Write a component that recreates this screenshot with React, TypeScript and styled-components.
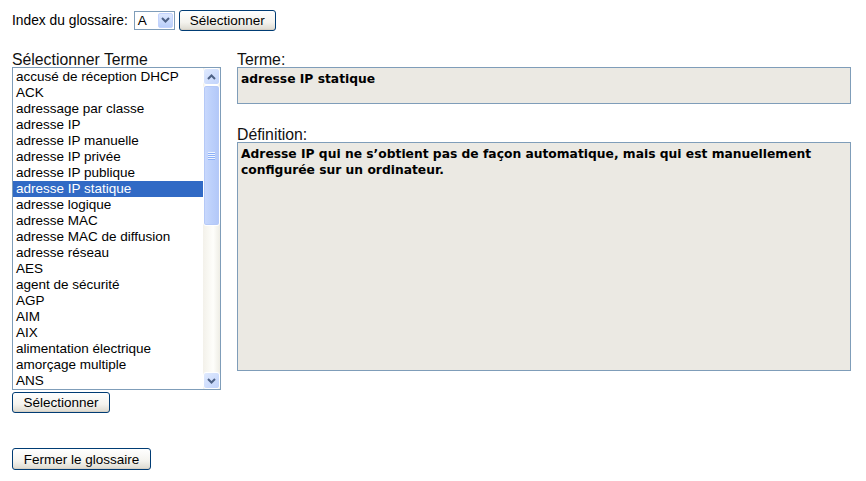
import React from "react";
import styled, { createGlobalStyle } from "styled-components";

const GlobalStyle = createGlobalStyle`
  html, body {
    margin: 0;
    padding: 0;
    background: #fff;
  }
  body {
    font-family: "Liberation Sans", Arial, sans-serif;
    color: #000;
  }
`;

const terms = [
  "accusé de réception DHCP",
  "ACK",
  "adressage par classe",
  "adresse IP",
  "adresse IP manuelle",
  "adresse IP privée",
  "adresse IP publique",
  "adresse IP statique",
  "adresse logique",
  "adresse MAC",
  "adresse MAC de diffusion",
  "adresse réseau",
  "AES",
  "agent de sécurité",
  "AGP",
  "AIM",
  "AIX",
  "alimentation électrique",
  "amorçage multiple",
  "ANS",
];

const selected = "adresse IP statique";

const Chevron = ({ up }: { up?: boolean }) => (
  <svg width="9" height="6" viewBox="0 0 9 6">
    <path
      d={up ? "M1 5 L4.5 1.5 L8 5" : "M1 1 L4.5 4.5 L8 1"}
      fill="none"
      stroke="#4D6185"
      strokeWidth="2"
    />
  </svg>
);

const App: React.FC = () => {
  return (
    <Page>
      <GlobalStyle />
      <TopBar>
        <IndexLabel>Index du glossaire:</IndexLabel>
        <Select>
          <SelectValue>A</SelectValue>
          <SelectArrow>
            <Chevron />
          </SelectArrow>
        </Select>
        <Button width={97}>Sélectionner</Button>
      </TopBar>

      <Columns>
        <LeftColumn>
          <Label>Sélectionner Terme</Label>
          <ListBox>
            <List>
              {terms.map((t) => (
                <Item key={t} active={t === selected}>
                  {t}
                </Item>
              ))}
            </List>
            <Scrollbar>
              <ArrowButton>
                <Chevron up />
              </ArrowButton>
              <Thumb>
                <Grip>
                  <span />
                  <span />
                  <span />
                  <span />
                </Grip>
              </Thumb>
              <Track />
              <ArrowButton>
                <Chevron />
              </ArrowButton>
            </Scrollbar>
          </ListBox>
          <ListButtonRow>
            <Button width={98}>Sélectionner</Button>
          </ListButtonRow>
        </LeftColumn>

        <RightColumn>
          <Label>Terme:</Label>
          <Field height={37}>adresse IP statique</Field>
          <Label spaced>Définition:</Label>
          <Field height={229}>
            Adresse IP qui ne s’obtient pas de façon automatique, mais qui est
            manuellement configurée sur un ordinateur.
          </Field>
        </RightColumn>
      </Columns>

      <CloseRow>
        <Button width={139} tall>
          Fermer le glossaire
        </Button>
      </CloseRow>
    </Page>
  );
};

export default App;

const Page = styled.div`
  padding: 10px 12px;
  width: 866px;
  box-sizing: border-box;
`;

const TopBar = styled.div`
  display: flex;
  align-items: center;
  height: 20px;
`;

const IndexLabel = styled.span`
  font-size: 13.8px;
  margin-right: 6px;
`;

const Select = styled.div`
  display: flex;
  align-items: center;
  width: 41px;
  height: 19px;
  box-sizing: border-box;
  border: 1px solid #7f9db9;
  padding: 1px;
  margin-right: 4px;
`;

const SelectValue = styled.span`
  flex: 1;
  font-size: 13.5px;
  padding-left: 2px;
`;

const SelectArrow = styled.div`
  width: 15px;
  height: 15px;
  display: flex;
  align-items: center;
  justify-content: center;
  border-radius: 2px;
  background: linear-gradient(180deg, #dde8fe 0%, #b9cefa 100%);
  border: 1px solid #c3d3fd;
  box-sizing: border-box;
`;

const Button = styled.button<{ width: number; tall?: boolean }>`
  width: ${(p) => p.width}px;
  height: ${(p) => (p.tall ? 22 : 21)}px;
  padding: 0;
  font-family: "Liberation Sans", Arial, sans-serif;
  font-size: 13.5px;
  color: #000;
  border: 1px solid #003c74;
  border-radius: 3px;
  background: linear-gradient(180deg, #ffffff 0%, #f4f3ee 60%, #dcd9cf 100%);
  box-shadow: inset 0 -1px 0 #d6d0c5;
`;

const Columns = styled.div`
  display: flex;
  margin-top: 22px;
`;

const LeftColumn = styled.div`
  width: 209px;
  display: flex;
  flex-direction: column;
  align-items: flex-start;
`;

const RightColumn = styled.div`
  width: 614px;
  margin-left: 16px;
  display: flex;
  flex-direction: column;
`;

const Label = styled.div<{ spaced?: boolean }>`
  font-size: 15.8px;
  line-height: 15px;
  height: 15px;
  color: #111;
  margin-top: ${(p) => (p.spaced ? "23px" : "0")};
`;

const ListBox = styled.div`
  width: 209px;
  height: 323px;
  box-sizing: border-box;
  border: 1px solid #7f9db9;
  display: flex;
  overflow: hidden;
`;

const List = styled.div`
  flex: 1;
  padding-top: 1px;
`;

const Item = styled.div<{ active?: boolean }>`
  height: 16px;
  line-height: 16px;
  font-size: 13.5px;
  padding-left: 3px;
  white-space: nowrap;
  background: ${(p) => (p.active ? "#316ac5" : "transparent")};
  color: ${(p) => (p.active ? "#fff" : "#000")};
`;

const Scrollbar = styled.div`
  width: 17px;
  display: flex;
  flex-direction: column;
  background: linear-gradient(90deg, #f3f1ea 0%, #fefefb 60%, #eeede5 100%);
`;

const ArrowButton = styled.div`
  height: 17px;
  box-sizing: border-box;
  display: flex;
  align-items: center;
  justify-content: center;
  border: 1px solid #fff;
  border-radius: 3px;
  background: linear-gradient(135deg, #e0eafe 0%, #c1d3fb 100%);
`;

const Thumb = styled.div`
  height: 141px;
  box-sizing: border-box;
  border: 1px solid #fff;
  border-radius: 3px;
  background: linear-gradient(90deg, #cad9fd 0%, #bcd0fb 50%, #b2c7f8 100%);
  box-shadow: inset 0 0 0 1px #b5c9f7;
  display: flex;
  align-items: center;
  justify-content: center;
`;

const Grip = styled.div`
  display: flex;
  flex-direction: column;
  gap: 1px;
  span {
    display: block;
    width: 7px;
    height: 1px;
    background: #eef4fe;
    box-shadow: 0 1px 0 #8cb0f8;
  }
`;

const Track = styled.div`
  flex: 1;
`;

const ListButtonRow = styled.div`
  margin-top: 2px;
`;

const Field = styled.div<{ height: number }>`
  height: ${(p) => p.height}px;
  box-sizing: border-box;
  border: 1px solid #7f9db9;
  background: #ebe9e3;
  padding: 3px 3px;
  font-family: "DejaVu Sans", Verdana, sans-serif;
  font-weight: bold;
  font-size: 12.3px;
  line-height: 16px;
`;

const CloseRow = styled.div`
  margin-top: 35px;
`;
